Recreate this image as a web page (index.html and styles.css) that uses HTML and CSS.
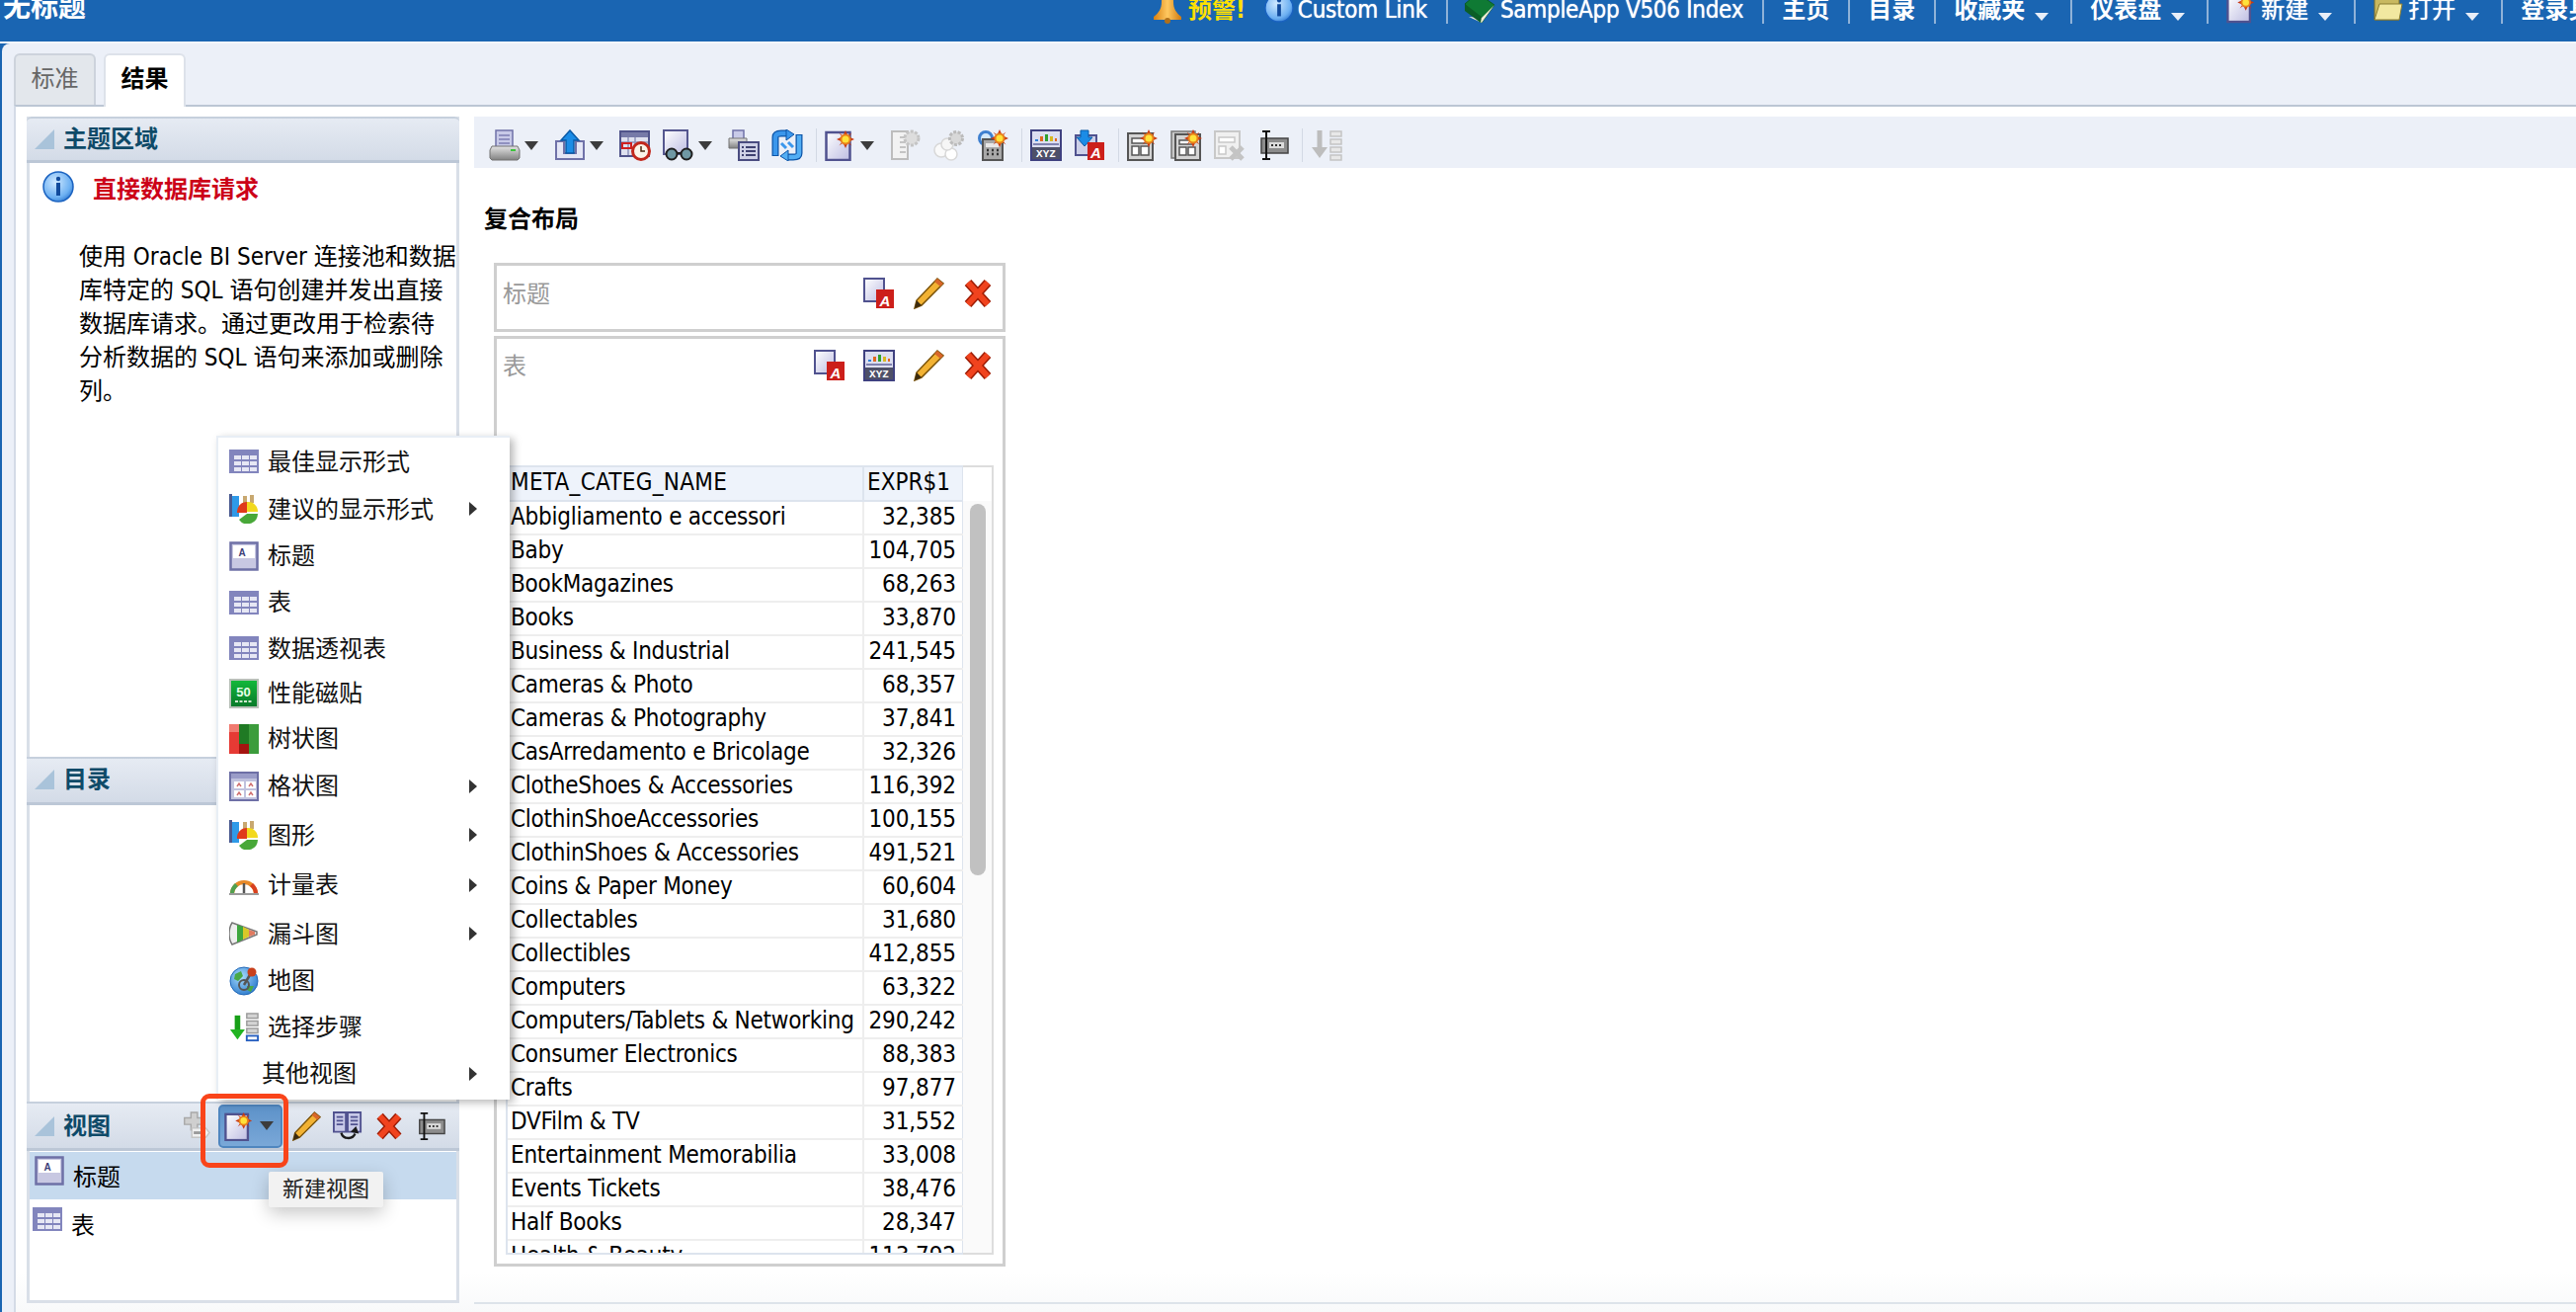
FILE: index.html
```html
<!DOCTYPE html>
<html lang="zh">
<head>
<meta charset="utf-8">
<title>无标题</title>
<link rel="stylesheet" href="styles.css">
</head>
<body>
<svg class="sprite" xmlns="http://www.w3.org/2000/svg">
<defs>
<linearGradient id="gDoc" x1="0" y1="0" x2="1" y2="1"><stop offset="0" stop-color="#fff"/><stop offset="1" stop-color="#bdbde2"/></linearGradient>
<linearGradient id="gPrn" x1="0" y1="0" x2="0" y2="1"><stop offset="0" stop-color="#e4e4e4"/><stop offset="1" stop-color="#808080"/></linearGradient>
<linearGradient id="gTile" x1="0" y1="0" x2="0" y2="1"><stop offset="0" stop-color="#12b83a"/><stop offset="1" stop-color="#0a7a2a"/></linearGradient>
<radialGradient id="gInfo" cx=".4" cy=".35" r=".8"><stop offset="0" stop-color="#cfe8ff"/><stop offset=".65" stop-color="#6cb0f2"/><stop offset="1" stop-color="#1560c0"/></radialGradient>
<radialGradient id="gGlobe" cx=".4" cy=".35" r=".8"><stop offset="0" stop-color="#a8dcff"/><stop offset="1" stop-color="#1a6cc4"/></radialGradient>
<linearGradient id="gBell" x1="0" y1="0" x2="1" y2="0"><stop offset="0" stop-color="#d98010"/><stop offset=".5" stop-color="#ffc860"/><stop offset="1" stop-color="#d07a10"/></linearGradient>
<g id="burst"><polygon points="0,-9 2.5,-3.5 6.5,-6.5 3.5,-2.5 9,0 3.5,2.5 6.5,6.5 2.5,3.5 0,9 -2.5,3.5 -6.5,6.5 -3.5,2.5 -9,0 -3.5,-2.5 -6.5,-6.5 -2.5,-3.5" fill="#c93a14"/><circle r="5.5" fill="#e8801a"/><circle r="3.5" fill="#ffe23a"/></g>
</defs>

<symbol id="i-printer" viewBox="0 0 32 32"><rect x="7" y="1" width="17" height="18" fill="#c8cae8" stroke="#6f71a8" stroke-width="1.5"/><path d="M10 6h11M10 10h11M10 14h11" stroke="#7c7eb2" stroke-width="1.5"/><path d="M3 17h26l2 4v8l-2 2H3l-2-2v-8z" fill="url(#gPrn)" stroke="#737373"/><rect x="22" y="20" width="5" height="2" fill="#3bc43b"/></symbol>
<symbol id="i-export" viewBox="0 0 32 32"><path d="M2 12h8v12h12V12h8v18H2z" fill="#e4e6f6" stroke="#6f71a8" stroke-width="2"/><polygon points="16,1 25,11 20,11 20,24 12,24 12,11 7,11" fill="#1b8ce6" stroke="#0b5aa6" stroke-width="1.500"/></symbol>
<symbol id="i-calendar" viewBox="0 0 32 32"><rect x="1" y="2" width="29" height="25" fill="#dfe1ef" stroke="#50538a" stroke-width="2"/><rect x="2" y="3" width="27" height="5" fill="#777aa8"/><path d="M2 13h27M2 19h18M9 8v18M16 8v18" stroke="#8f92bb" stroke-width="1.500"/><rect x="3" y="14" width="9" height="5" fill="none" stroke="#d02020" stroke-width="2"/><circle cx="22" cy="22" r="8.500" fill="#fbf4e8" stroke="#c2281c" stroke-width="3"/><path d="M22 17v5h4" fill="none" stroke="#4a2a10" stroke-width="1.500"/></symbol>
<symbol id="i-glasses" viewBox="0 0 32 32"><rect x="1" y="1" width="24" height="24" fill="url(#gDoc)" stroke="#55578f" stroke-width="2"/><circle cx="9" cy="25" r="5.500" fill="#6f98a4" stroke="#1e1e1e" stroke-width="2"/><circle cx="24" cy="25" r="5.500" fill="#6f98a4" stroke="#1e1e1e" stroke-width="2"/><path d="M14 24h5" stroke="#1e1e1e" stroke-width="2"/></symbol>
<symbol id="i-printlist" viewBox="0 0 32 32"><rect x="5" y="1" width="11" height="9" fill="#c8cae8" stroke="#6f71a8" stroke-width="1.500"/><path d="M1 9h18v10H1z" fill="url(#gPrn)" stroke="#737373"/><rect x="11" y="13" width="20" height="18" fill="#cfd1e6" stroke="#4a4c80" stroke-width="2"/><path d="M18 18h10M18 22h10M18 26h10M14 18h2M14 22h2M14 26h2" stroke="#3f4170" stroke-width="2"/></symbol>
<symbol id="i-refresh" viewBox="0 0 32 32"><path d="M4 27V8c0-3 2-4 6-4h6" fill="none" stroke="#0d55a8" stroke-width="7"/><path d="M4 26V8c0-3 2-4 6-4h6" fill="none" stroke="#3b97ec" stroke-width="4.500"/><polygon points="15,0 23,5 15,11" fill="#3b97ec" stroke="#0d55a8"/><path d="M28 5v19c0 3-2 4-6 4h-6" fill="none" stroke="#0d55a8" stroke-width="7"/><path d="M28 6v18c0 3-2 4-6 4h-6" fill="none" stroke="#52aef4" stroke-width="4.500"/><polygon points="17,21 9,27 17,32" fill="#52aef4" stroke="#0d55a8"/><path d="M10 14l5 5M22 18l-5-5" stroke="#3b97ec" stroke-width="3"/></symbol>
<symbol id="i-new" viewBox="0 0 32 32"><rect x="1.500" y="3" width="24" height="28" fill="url(#gDoc)" stroke="#50528f" stroke-width="2.500"/><use href="#burst" transform="translate(21 10)"/></symbol>
<symbol id="i-gear" viewBox="0 0 32 32"><path d="M2 2h16v28H2z" fill="#f2f2f2" stroke="#bdbdbd" stroke-width="2"/><path d="M10 8h6M10 13h6M10 18h6M10 23h6" stroke="#c4c4c4" stroke-width="2"/><circle cx="22" cy="9" r="7" fill="#ddd" stroke="#c4c4c4" stroke-width="3" stroke-dasharray="3 1.500"/></symbol>
<symbol id="i-circles" viewBox="0 0 32 32"><circle cx="8" cy="21" r="7" fill="#fafafa" stroke="#d8d8d8" stroke-width="1.500"/><circle cx="18" cy="25" r="6" fill="#fff" stroke="#d8d8d8" stroke-width="1.500"/><circle cx="14" cy="15" r="6" fill="#f6f6f6" stroke="#d8d8d8" stroke-width="1.500"/><circle cx="23" cy="9" r="6.500" fill="#d8d8d8" stroke="#bbb" stroke-width="3" stroke-dasharray="3 1.500"/></symbol>
<symbol id="i-calc" viewBox="0 0 32 32"><circle cx="9" cy="9" r="6.500" fill="#d4e8fa" stroke="#3f80d0" stroke-width="3"/><rect x="6" y="10" width="20" height="21" fill="#a8a8a8" stroke="#555" stroke-width="2"/><rect x="9" y="14" width="14" height="4" fill="#e8e8e8"/><path d="M10 21h2m3 0h2m3 0h2M10 25h2m3 0h2m3 0h2" stroke="#333" stroke-width="2.500"/><use href="#burst" transform="translate(23 9)"/></symbol>
<symbol id="i-xyz" viewBox="0 0 32 32"><rect x="1" y="1" width="30" height="30" fill="#dcdef0" stroke="#3f4180" stroke-width="2"/><rect x="5" y="10" width="3" height="2" fill="#3080d8"/><rect x="10" y="7" width="3" height="5" fill="#e06820"/><rect x="15" y="5" width="3" height="7" fill="#30a030"/><rect x="20" y="7" width="3" height="5" fill="#d8b820"/><rect x="25" y="9" width="2" height="3" fill="#e06820"/><path d="M3 15h26" stroke="#8082b0" stroke-width="2"/><rect x="2" y="18" width="28" height="12" fill="#4e5068"/><text class="svgxyz" x="16" y="28" text-anchor="middle">XYZ</text></symbol>
<symbol id="i-down" viewBox="0 0 32 32"><rect x="2" y="6" width="21" height="20" fill="#cdd0e8" stroke="#50528f" stroke-width="2"/><polygon points="11,17 3,8 7,8 7,1 15,1 15,8 19,8" fill="#1b8ce6" stroke="#0b5aa6"/><rect x="14" y="13" width="17" height="18" fill="#cc1f1a"/><text class="svga" x="22.500" y="28.500" text-anchor="middle">A</text></symbol>
<symbol id="i-doca" viewBox="0 0 32 32"><rect x="1" y="1" width="20" height="23" fill="url(#gDoc)" stroke="#50528f" stroke-width="2"/><rect x="13" y="12" width="18" height="19" fill="#cc1f1a"/><text class="svga" x="22" y="28.500" text-anchor="middle">A</text></symbol>
<symbol id="i-l1" viewBox="0 0 32 32"><rect x="1" y="4" width="25" height="27" fill="#d4d4d4" stroke="#555" stroke-width="2"/><rect x="5" y="9" width="15" height="5" fill="#fff" stroke="#555" stroke-width="1.500"/><rect x="5" y="17" width="7" height="9" fill="#fff" stroke="#555" stroke-width="1.500"/><rect x="14" y="17" width="8" height="9" fill="#fff" stroke="#555" stroke-width="1.500"/><use href="#burst" transform="translate(22 9)"/></symbol>
<symbol id="i-l2" viewBox="0 0 32 32"><rect x="1" y="2" width="24" height="27" fill="#c8c8c8" stroke="#777" stroke-width="1.500"/><rect x="5" y="5" width="25" height="26" fill="#d4d4d4" stroke="#555" stroke-width="2"/><rect x="9" y="11" width="14" height="4" fill="#fff" stroke="#555" stroke-width="1.500"/><rect x="9" y="18" width="7" height="8" fill="#fff" stroke="#555" stroke-width="1.500"/><rect x="18" y="18" width="7" height="8" fill="#fff" stroke="#555" stroke-width="1.500"/><use href="#burst" transform="translate(23 9)"/></symbol>
<symbol id="i-lx" viewBox="0 0 32 32"><rect x="1" y="2" width="25" height="27" fill="#f0f0f0" stroke="#c8c8c8" stroke-width="2"/><rect x="5" y="8" width="16" height="5" fill="#fff" stroke="#c8c8c8" stroke-width="1.500"/><rect x="5" y="17" width="7" height="8" fill="#fff" stroke="#c8c8c8" stroke-width="1.500"/><path d="M17 18l12 12M29 18L17 30" stroke="#c4c4c4" stroke-width="5"/></symbol>
<symbol id="i-width" viewBox="0 0 32 32"><rect x="4" y="9" width="27" height="15" fill="#8c8c8c" stroke="#444" stroke-width="1.500"/><rect x="12" y="13" width="15" height="6" fill="#dcdcdc"/><path d="M14 16h2m2 0h2m2 0h2" stroke="#333" stroke-width="2"/><path d="M5 2h8M9 2v28M5 30h8" fill="none" stroke="#111" stroke-width="2"/></symbol>
<symbol id="i-order" viewBox="0 0 32 32"><path d="M9 1v19" stroke="#bdbdbd" stroke-width="5"/><polygon points="1,18 17,18 9,29" fill="#bdbdbd"/><g fill="#e8e8e8" stroke="#c4c4c4" stroke-width="1.500"><rect x="20" y="2" width="11" height="5"/><rect x="20" y="10" width="11" height="5"/><rect x="20" y="18" width="11" height="5"/><rect x="20" y="26" width="11" height="5"/></g></symbol>
<symbol id="i-steps" viewBox="0 0 32 32"><path d="M9 3v18" stroke="#18a018" stroke-width="6"/><polygon points="1,18 17,18 9,29" fill="#22b422"/><g fill="#d4d4d4" stroke="#9a9a9a" stroke-width="1.500"><rect x="19" y="1" width="12" height="5"/><rect x="19" y="9" width="12" height="5"/><rect x="19" y="17" width="12" height="5"/></g><rect x="19" y="25" width="12" height="5" fill="#fff" stroke="#2860c0" stroke-width="2"/></symbol>
<symbol id="i-pencil" viewBox="0 0 32 32"><path d="M25 1l6 5L9 28l-7 3 2-8z" fill="#f2b233" stroke="#7a5208" stroke-width="1.500"/><path d="M4 23l5 5-7 3z" fill="#3a2a10"/><path d="M25 1l6 5-3 3-6-5z" fill="#d8662a"/></symbol>
<symbol id="i-x" viewBox="0 0 32 32"><path d="M6 5l20 22M26 5L6 27" stroke="#9e1c04" stroke-width="9"/><path d="M6 5l20 22M26 5L6 27" stroke="#f0431e" stroke-width="6"/></symbol>
<symbol id="i-add" viewBox="0 0 32 32"><path d="M11 1h7v6h7v7h-7v6h-7v-6H4V7h7z" fill="#cfcfcf" stroke="#a8a8a8" stroke-width="1.500"/><path d="M12 18h15l4 5-4 5H12z" fill="#f0f0f0" stroke="#c4c4c4" stroke-width="1.500"/><path d="M14 23h9" stroke="#999" stroke-width="3"/></symbol>
<symbol id="i-swap" viewBox="0 0 32 32"><path d="M1 1h13v21H1zM16 1h14v21H16z" fill="#c8cae8" stroke="#50528f" stroke-width="2"/><path d="M4 6h7M4 10h7M4 14h7M19 6h8M19 10h8M19 14h8" stroke="#50528f" stroke-width="2"/><path d="M9 23a8 8 0 0 0 15 1" fill="none" stroke="#1a1a1a" stroke-width="2.500"/><polygon points="19,22 28,24 25,16" fill="#1a1a1a"/></symbol>
<symbol id="i-grid" viewBox="0 0 30 24"><rect width="30" height="24" fill="#8285bd"/><g fill="#e6e7f4"><rect x="5" y="6" width="7" height="4"/><rect x="13" y="6" width="7" height="4"/><rect x="21" y="6" width="7" height="4"/><rect x="5" y="12" width="7" height="4"/><rect x="13" y="12" width="7" height="4"/><rect x="21" y="12" width="7" height="4"/><rect x="5" y="18" width="7" height="4"/><rect x="13" y="18" width="7" height="4"/><rect x="21" y="18" width="7" height="4"/></g></symbol>
<symbol id="i-chart" viewBox="0 0 30 30"><rect x="0" y="0" width="3" height="23" fill="#4a5a90"/><rect x="3" y="2" width="7" height="21" fill="#2f9ae8"/><rect x="14" y="2" width="4" height="8" fill="#c8a870"/><rect x="21" y="1" width="4" height="8" fill="#c8a870"/><path d="M18 19H8A10 10 0 0 1 18 8z" fill="#e03a1a"/><path d="M18 18V8a10 10 0 0 1 11 10z" fill="#f2d91e"/><path d="M18 20h11A10.500 10.500 0 0 1 10 26z" fill="#48a838"/></symbol>
<symbol id="i-title" viewBox="0 0 30 30"><rect x="1.500" y="1.500" width="27" height="27" fill="#c8c8e2" stroke="#6e70a6" stroke-width="2.500"/><rect x="4" y="4" width="22" height="13" fill="#fff"/><text class="svgt" x="13" y="15" text-anchor="middle">A</text></symbol>
<symbol id="i-tile" viewBox="0 0 30 30"><rect x="0" y="0" width="30" height="30" fill="#b8c0b8"/><rect x="2" y="2" width="26" height="26" fill="url(#gTile)"/><text class="svg50" x="14.500" y="18" text-anchor="middle">50</text><path d="M6 23h18" stroke="#cfe8cf" stroke-width="2" stroke-dasharray="3 1.500"/></symbol>
<symbol id="i-tree" viewBox="0 0 30 30"><rect width="10" height="30" fill="#e63a34"/><rect y="0" width="10" height="8" fill="#f07a70"/><rect x="10" width="10" height="20" fill="#1f7a24"/><rect x="20" width="10" height="30" fill="#3c9c3c"/><rect x="10" y="20" width="10" height="10" fill="#a51410"/></symbol>
<symbol id="i-trellis" viewBox="0 0 30 30"><rect x="1" y="1" width="28" height="28" fill="#c0c2de" stroke="#6e70a6" stroke-width="2"/><rect x="2" y="2" width="26" height="5" fill="#9a9cc8"/><g fill="#fff"><rect x="5" y="10" width="10" height="7"/><rect x="17" y="10" width="10" height="7"/><rect x="5" y="19" width="10" height="7"/><rect x="17" y="19" width="10" height="7"/></g><path d="M8 15l2-3 2 3M20 15l2-3 2 3M8 24l2-3 2 3M20 24l2-3 2 3" fill="none" stroke="#d07070" stroke-width="1.500"/></symbol>
<symbol id="i-gauge" viewBox="0 0 30 20"><path d="M1 19a14 14 0 0 1 28 0h-4a10 10 0 0 0-20 0z" fill="#e88a28"/><path d="M1 19a14 14 0 0 1 5-11l3 3a10 10 0 0 0-4 8z" fill="#50a050"/><path d="M24 8a14 14 0 0 1 5 11h-4a10 10 0 0 0-4-8z" fill="#d84020"/><path d="M15 8v11" stroke="#555" stroke-width="2.500"/><path d="M0 19h30" stroke="#9a9a9a" stroke-width="2"/></symbol>
<symbol id="i-funnel" viewBox="0 0 30 24"><path d="M3 1l25 9v3L3 23c-4-6-4-16 0-22z" fill="#eee" stroke="#777" stroke-width="1.500"/><path d="M8 3v18l6-3V5z" fill="#3ea63e"/><path d="M14 5v13l6-3V8z" fill="#d8c828"/><path d="M20 8v7l6-2v-3z" fill="#e07a60"/></symbol>
<symbol id="i-globe" viewBox="0 0 30 30"><circle cx="15" cy="15" r="14" fill="url(#gGlobe)" stroke="#2168b8"/><path d="M6 8l6-3 2 5-5 5-4-2zM18 20l7 0-3 6-4-2z" fill="#48a848"/><circle cx="15" cy="19" r="5" fill="none" stroke="#555" stroke-width="2"/><path d="M15 19l7-12" stroke="#555" stroke-width="2.500"/><circle cx="23" cy="6" r="4.500" fill="#c8401c"/></symbol>
<symbol id="i-bell" viewBox="0 0 30 32"><path d="M15 0c4 0 6 4 6 10 0 7 3 11 8 15v3H1v-3c5-4 8-8 8-15 0-6 2-10 6-10z" fill="url(#gBell)"/><circle cx="15" cy="29" r="3" fill="#b0701a"/></symbol>
<symbol id="i-info" viewBox="0 0 32 32"><circle cx="16" cy="16" r="15" fill="url(#gInfo)" stroke="#1a62c0" stroke-width="1.500"/><circle cx="16" cy="8" r="2.200" fill="#114a9c"/><rect x="14" y="12" width="4" height="13" fill="#114a9c"/></symbol>
<symbol id="i-book" viewBox="0 0 32 32"><path d="M1 12L14 1l17 12-13 18z" fill="#0f7a34" stroke="#0a5a28"/><path d="M5 25l13 6 13-18-13 13z" fill="#f0ecd8"/><path d="M1 12l17 13-1 6L1 19z" fill="#0b5e28"/></symbol>
<symbol id="i-folder" viewBox="0 0 30 32"><path d="M1 3h11l3 3h11v22H1z" fill="#c8b860" stroke="#7a6c28"/><path d="M1 28l5-16h23l-3 16z" fill="#f2e8a0" stroke="#8a7c30"/></symbol>
<symbol id="i-tri" viewBox="0 0 20 20"><polygon points="20,0 20,20 0,20" fill="#a9c3da"/></symbol>
</svg>

<header class="top">
  <div class="app-title">无标题</div>
  <nav class="nav">
    <svg class="nic"><use href="#i-bell"/></svg><span class="nt warn">预警!</span>
    <svg class="nic ni2"><use href="#i-info"/></svg><span class="nt nt2">Custom Link</span>
    <i class="nsep"></i>
    <svg class="nic nbk"><use href="#i-book"/></svg><span class="nt nt1 nt3">SampleApp V506 Index</span>
    <i class="nsep"></i><span class="nt">主页</span>
    <i class="nsep"></i><span class="nt">目录</span>
    <i class="nsep"></i><span class="nt">收藏夹</span><i class="ncaret"></i>
    <i class="nsep"></i><span class="nt">仪表盘</span><i class="ncaret"></i>
    <i class="nsep"></i><svg class="nic"><use href="#i-new"/></svg><span class="nt nt1">新建</span><i class="ncaret"></i>
    <i class="nsep"></i><svg class="nic"><use href="#i-folder"/></svg><span class="nt nt1">打开</span><i class="ncaret"></i>
    <i class="nsep"></i><span class="nt">登录身份</span>
  </nav>
</header>

<div class="page">
  <div class="tabs">
    <div class="tab">标准</div>
    <div class="tab active">结果</div>
  </div>
  <div class="content">
    <aside class="side">
      <section class="sec sec-subject">
        <div class="sec-h"><svg class="tri"><use href="#i-tri"/></svg><span class="sec-t">主题区域</span></div>
        <div class="info-row"><svg class="info"><use href="#i-info"/></svg><span class="req">直接数据库请求</span></div>
        <p class="desc">使用 Oracle BI Server 连接池和数据<br>库特定的 SQL 语句创建并发出直接<br>数据库请求。通过更改用于检索待<br>分析数据的 SQL 语句来添加或删除<br>列。</p>
      </section>
      <section class="sec sec-catalog">
        <div class="sec-h sec-h2"><svg class="tri"><use href="#i-tri"/></svg><span class="sec-t">目录</span></div>
      </section>
      <section class="sec sec-views">
        <div class="sec-h sec-h3">
          <svg class="tri"><use href="#i-tri"/></svg><span class="sec-t">视图</span>
          <div class="vtools">
            <svg class="ic30"><use href="#i-add"/></svg>
            <div class="hoverbtn"><svg class="ic30"><use href="#i-new"/></svg><i class="caret"></i></div>
            <svg class="ic30"><use href="#i-pencil"/></svg>
            <svg class="ic30"><use href="#i-swap"/></svg>
            <svg class="ic30"><use href="#i-x"/></svg>
            <svg class="ic30"><use href="#i-width"/></svg>
          </div>
        </div>
        <div class="vrow sel"><svg class="ic-title"><use href="#i-title"/></svg><span class="vtext">标题</span></div>
        <div class="vrow"><svg class="ic-grid"><use href="#i-grid"/></svg><span class="vtext">表</span></div>
      </section>
    </aside>

    <main class="main">
      <div class="toolbar">
        <div class="tg"><svg class="ic"><use href="#i-printer"/></svg><i class="caret"></i></div>
        <div class="tg"><svg class="ic"><use href="#i-export"/></svg><i class="caret"></i></div>
        <svg class="ic"><use href="#i-calendar"/></svg>
        <div class="tg"><svg class="ic"><use href="#i-glasses"/></svg><i class="caret"></i></div>
        <svg class="ic"><use href="#i-printlist"/></svg>
        <svg class="ic"><use href="#i-refresh"/></svg>
        <i class="tsep"></i>
        <div class="tg"><svg class="ic"><use href="#i-new"/></svg><i class="caret"></i></div>
        <svg class="ic"><use href="#i-gear"/></svg>
        <svg class="ic"><use href="#i-circles"/></svg>
        <svg class="ic"><use href="#i-calc"/></svg>
        <i class="tsep"></i>
        <svg class="ic"><use href="#i-xyz"/></svg>
        <svg class="ic"><use href="#i-down"/></svg>
        <i class="tsep"></i>
        <svg class="ic"><use href="#i-l1"/></svg>
        <svg class="ic"><use href="#i-l2"/></svg>
        <svg class="ic"><use href="#i-lx"/></svg>
        <svg class="ic"><use href="#i-width"/></svg>
        <i class="tsep"></i>
        <svg class="ic"><use href="#i-order"/></svg>
      </div>
      <h2 class="layout-h">复合布局</h2>
      <div class="box box-title">
        <div class="box-h"><span class="box-t">标题</span><div class="box-ic"><svg class="ic"><use href="#i-doca"/></svg><svg class="ic"><use href="#i-pencil"/></svg><svg class="ic"><use href="#i-x"/></svg></div></div>
      </div>
      <div class="box box-table">
        <div class="box-h"><span class="box-t">表</span><div class="box-ic"><svg class="ic"><use href="#i-doca"/></svg><svg class="ic"><use href="#i-xyz"/></svg><svg class="ic"><use href="#i-pencil"/></svg><svg class="ic"><use href="#i-x"/></svg></div></div>
        <div class="tbl-wrap">
          <div class="tbl-clip">
            <table class="tbl">
              <thead><tr><th class="c1">META_CATEG_NAME</th><th class="c2">EXPR$1</th></tr></thead>
              <tbody>
                <tr><td>Abbigliamento e accessori</td><td class="n">32,385</td></tr>
                <tr><td>Baby</td><td class="n">104,705</td></tr>
                <tr><td>BookMagazines</td><td class="n">68,263</td></tr>
                <tr><td>Books</td><td class="n">33,870</td></tr>
                <tr><td>Business &amp; Industrial</td><td class="n">241,545</td></tr>
                <tr><td>Cameras &amp; Photo</td><td class="n">68,357</td></tr>
                <tr><td>Cameras &amp; Photography</td><td class="n">37,841</td></tr>
                <tr><td>CasArredamento e Bricolage</td><td class="n">32,326</td></tr>
                <tr><td>ClotheShoes &amp; Accessories</td><td class="n">116,392</td></tr>
                <tr><td>ClothinShoeAccessories</td><td class="n">100,155</td></tr>
                <tr><td>ClothinShoes &amp; Accessories</td><td class="n">491,521</td></tr>
                <tr><td>Coins &amp; Paper Money</td><td class="n">60,604</td></tr>
                <tr><td>Collectables</td><td class="n">31,680</td></tr>
                <tr><td>Collectibles</td><td class="n">412,855</td></tr>
                <tr><td>Computers</td><td class="n">63,322</td></tr>
                <tr><td>Computers/Tablets &amp; Networking</td><td class="n">290,242</td></tr>
                <tr><td>Consumer Electronics</td><td class="n">88,383</td></tr>
                <tr><td>Crafts</td><td class="n">97,877</td></tr>
                <tr><td>DVFilm &amp; TV</td><td class="n">31,552</td></tr>
                <tr><td>Entertainment Memorabilia</td><td class="n">33,008</td></tr>
                <tr><td>Events Tickets</td><td class="n">38,476</td></tr>
                <tr><td>Half Books</td><td class="n">28,347</td></tr>
                <tr><td>Health &amp; Beauty</td><td class="n">113,792</td></tr>
              </tbody>
            </table>
          </div>
          <div class="track"><div class="thumb"></div></div>
        </div>
      </div>
    </main>
  </div>
</div>

<div class="menu">
  <div class="mi r48"><svg class="mic mic-g"><use href="#i-grid"/></svg><span>最佳显示形式</span></div>
  <div class="mi r48"><svg class="mic"><use href="#i-chart"/></svg><span>建议的显示形式</span><i class="arrow"></i></div>
  <div class="mi r47"><svg class="mic"><use href="#i-title"/></svg><span>标题</span></div>
  <div class="mi r47"><svg class="mic mic-g"><use href="#i-grid"/></svg><span>表</span></div>
  <div class="mi r46"><svg class="mic mic-g"><use href="#i-grid"/></svg><span>数据透视表</span></div>
  <div class="mi r45"><svg class="mic"><use href="#i-tile"/></svg><span>性能磁贴</span></div>
  <div class="mi r47"><svg class="mic"><use href="#i-tree"/></svg><span>树状图</span></div>
  <div class="mi r49"><svg class="mic"><use href="#i-trellis"/></svg><span>格状图</span><i class="arrow"></i></div>
  <div class="mi r50"><svg class="mic"><use href="#i-chart"/></svg><span>图形</span><i class="arrow"></i></div>
  <div class="mi r51"><svg class="mic mic-s"><use href="#i-gauge"/></svg><span>计量表</span><i class="arrow"></i></div>
  <div class="mi r48"><svg class="mic mic-g"><use href="#i-funnel"/></svg><span>漏斗图</span><i class="arrow"></i></div>
  <div class="mi r47"><svg class="mic"><use href="#i-globe"/></svg><span>地图</span></div>
  <div class="mi r47"><svg class="mic"><use href="#i-steps"/></svg><span>选择步骤</span></div>
  <div class="mi r47 noicon"><span>其他视图</span><i class="arrow"></i></div>
</div>

<div class="redbox"></div>
<div class="tooltip">新建视图</div>
</body>
</html>
```
FILE: styles.css
```css
* { box-sizing: border-box; }
html, body { margin: 0; height: 100%; }
body {
  width: 2608px;
  height: 1328px;
  overflow: hidden;
  background: #1a65b2;
  font-family: "DejaVu Sans", "Noto Sans CJK SC", sans-serif;
  font-stretch: condensed;
  font-size: 24px;
  color: #000;
  display: flex;
  flex-direction: column;
  position: relative;
}
.sprite { position: absolute; width: 0; height: 0; }
.svgxyz { font: bold 11px "Liberation Mono", monospace; fill: #fff; }
.svga { font: italic bold 15px "Liberation Sans", sans-serif; fill: #fff; }
.svgt { font: bold 10px "Liberation Sans", sans-serif; fill: #3c3e78; }
.svg50 { font: bold 13px "Liberation Sans", sans-serif; fill: #e8ffe8; }

/* top bar */
.top {
  flex: none;
  height: 44px;
  background: #1a65b2;
  border-bottom: 2px solid #f4f7fb;
  display: flex;
  align-items: flex-start;
  overflow: hidden;
}
.app-title {
  color: #fff;
  font-size: 28px;
  font-weight: 700;
  line-height: 16px;
  padding-left: 3px;
}
.nav {
  margin-left: auto;
  flex: none;
  width: 1441px;
  height: 42px;
  display: flex;
  align-items: flex-start;
  overflow: hidden;
  white-space: nowrap;
  color: #fff;
}
.nt { line-height: 20px; font-weight: 700; flex: none; }
.nt1 { margin-left: 5px; font-weight: 400; text-shadow: 0 0 1px #fff; }
.nt2 { margin-left: 4px; font-weight: 400; text-shadow: 0 0 1px #fff; letter-spacing: -.25px; }
.nt3 { letter-spacing: -.3px; }
.warn { color: #ffe000; margin-left: 6px; }
.nic { width: 30px; height: 32px; flex: none; margin-top: -8px; overflow: visible; }
.ni2 { margin-left: 19px; }
.nbk { width: 32px; margin-left: -2px; }
.nsep { flex: none; width: 2px; height: 24px; background: #8fb2d8; margin: 0 18px 0 19px; }
.ncaret {
  flex: none;
  margin: 13px 3px 0 10px;
  border-left: 7px solid transparent;
  border-right: 7px solid transparent;
  border-top: 8px solid #e8eef8;
}

/* page */
.page {
  flex: 1;
  margin-left: 2px;
  background: #ecf0f8;
  border-top-left-radius: 8px;
  padding-top: 10px;
  display: flex;
  flex-direction: column;
  min-height: 0;
}
.tabs { display: flex; gap: 8px; padding-left: 12px; height: 52px; flex: none; }
.tab {
  width: 83px;
  height: 52px;
  background: #e3e7ec;
  border: 2px solid #cdd3dc;
  border-bottom: 0;
  border-radius: 6px 6px 0 0;
  color: #666;
  text-align: center;
  line-height: 48px;
}
.tab.active {
  background: #fff;
  color: #000;
  font-weight: 700;
  height: 54px;
  position: relative;
  z-index: 1;
  border-color: #dde2ea;
}
.content {
  flex: 1;
  min-height: 0;
  margin-left: 12px;
  background: linear-gradient(#fff 1180px, #f8f9fa);
  border-top: 2px solid #bcc6d4;
  border-left: 2px solid #d4dbe6;
  padding: 10px 0 0 11px;
  display: flex;
}

/* sidebar */
.side {
  flex: none;
  width: 438px;
  height: 1201px;
  border-left: 3px solid #d9dfe8;
  border-right: 3px solid #d9dfe8;
  border-bottom: 3px solid #d9dfe8;
  background: #fff;
  margin-right: 15px;
  display: flex;
  flex-direction: column;
}
.sec-subject { height: 648px; flex: none; }
.sec-catalog { height: 349px; flex: none; }
.sec-views { flex: 1; min-height: 0; }
.sec-h {
  height: 47px;
  margin: 0 -3px;
  background: linear-gradient(#e6ebf3, #d3dbe7);
  border-top: 2px solid #c6d0dd;
  border-bottom: 3px solid #bcc7d6;
  border-radius: 5px 5px 0 0;
  display: flex;
  align-items: center;
  padding-left: 8px;
}
.sec-h2 { height: 49px; border-radius: 0; padding-bottom: 2px; }
.sec-h3 { height: 50px; border-radius: 0; }
.tri { width: 20px; height: 20px; flex: none; }
.sec-t { font-weight: 700; color: #0e4a68; margin-left: 9px; line-height: 34px; flex: none; white-space: nowrap; }
.info-row { display: flex; align-items: center; height: 34px; margin: 7px 0 0 13px; }
.info { width: 32px; height: 32px; flex: none; }
.req { color: #cc0018; font-weight: 700; margin-left: 19px; }
.desc { margin: 37px 0 0 50px; line-height: 34px; white-space: nowrap; }

.vtools { display: flex; align-items: center; margin-left: 71px; flex: none; }
.ic30 { width: 30px; height: 30px; flex: none; margin-right: 12px; }
.hoverbtn {
  flex: none;
  width: 65px;
  height: 44px;
  margin: 0 9px 0 -4px;
  background: linear-gradient(#5d92c9, #7aa8d8);
  border: 2px solid #4f86bf;
  border-radius: 5px;
  display: flex;
  align-items: center;
  padding-left: 4px;
}
.hoverbtn .ic30 { margin-right: 6px; }
.vrow { display: flex; align-items: flex-start; height: 48px; padding-left: 4px; }
.vrow.sel { background: #c6daee; margin-top: 1px; }
.ic-title { width: 30px; height: 30px; margin: 4px 0 0 1px; flex: none; }
.ic-grid { width: 30px; height: 24px; margin: 8px 0 0 -1px; flex: none; }
.vtext { margin: 9px 0 0 9px; line-height: 34px; }
.vrow:not(.sel) .vtext { margin-top: 10px; }

/* main */
.main { flex: 1; min-width: 0; height: 1202px; border-bottom: 2px solid #dde3ea; }
.toolbar {
  height: 52px;
  background: #ecf0f8;
  display: flex;
  align-items: center;
  gap: 12px;
  padding: 6px 0 0 15px;
}
.ic { width: 32px; height: 32px; flex: none; }
.tg { display: flex; align-items: center; gap: 4px; margin-right: 4px; flex: none; }
.caret {
  flex: none;
  display: block;
  border-left: 7px solid transparent;
  border-right: 7px solid transparent;
  border-top: 9px solid #3c3c3c;
}
.tsep { flex: none; width: 1px; height: 34px; background: #d3d9e4; margin-left: 1px; margin-right: -4px; }
.layout-h { margin: 35px 0 0 10px; font-size: 24px; font-weight: 700; line-height: 34px; }
.box { width: 518px; margin-left: 20px; border: 3px solid #cfcfcf; }
.box-title { height: 70px; margin-top: 27px; padding-top: 11px; }
.box-table { height: 942px; margin-top: 4px; padding-top: 10px; }
.box-h { display: flex; align-items: center; height: 34px; padding: 0 9px 0 6px; }
.box-t { color: #999; margin-bottom: 3px; }
.box-ic { display: flex; gap: 18px; margin-left: auto; }
.tbl-wrap { display: flex; margin: 84px 0 0 9px; width: 494px; height: 799px; overflow: hidden; }
.tbl-clip { flex: none; width: 463px; height: 799px; overflow: hidden; border-top: 2px solid #dde4ee; border-bottom: 2px solid #dde4ee; border-left: 2px solid #dde4ee; }
.tbl { border-collapse: collapse; table-layout: fixed; width: 461px; }
.tbl th, .tbl td { height: 34px; padding: 0; line-height: 31px; font-weight: 400; overflow: hidden; white-space: nowrap; text-align: left; }
.c1 { width: 360px; }
.c2 { width: 101px; }
.tbl th { background: #eef3fb; border-bottom: 2px solid #dde4ee; border-right: 2px solid #dde4ee; padding: 0 0 2px 3px; letter-spacing: .3px; }
.tbl th.c2 { padding-left: 3px; letter-spacing: 0; }
.tbl td { border-bottom: 2px solid #eeeeee; border-right: 2px solid #eeeeee; padding: 0 0 1px 3px; letter-spacing: -.25px; }
.tbl td.n { text-align: right; padding: 0 6px 1px 0; border-right-color: #dde4ee; letter-spacing: -.1px; }
.track {
  flex: 1;
  background: linear-gradient(#fff 34px, #fafafa 34px);
  border-top: 2px solid #ddd;
  border-right: 2px solid #ddd;
  border-bottom: 2px solid #ddd;
  padding: 37px 0 0 7px;
}
.thumb { width: 16px; height: 376px; background: #c1c1c1; border-radius: 8px; }

/* overlays */
.menu {
  position: absolute;
  left: 219px;
  top: 441px;
  width: 297px;
  height: 672px;
  background: #fff;
  border-top: 2px solid #e8eef5;
  border-left: 2px solid #e8eef5;
  box-shadow: 4px 3px 8px rgba(0, 0, 0, .28);
  padding-right: 33px;
  color: #111;
  font-family: "Noto Sans CJK SC", sans-serif;
}
.mi { display: flex; align-items: center; padding-left: 11px; }
.mi.noicon { padding-left: 44px; }
.mi > span { margin: 0 0 4px 9px; }
.mi.noicon > span { margin-left: 0; }
.r45 { height: 45px; } .r46 { height: 46px; } .r47 { height: 47px; } .r48 { height: 48px; }
.r49 { height: 49px; } .r50 { height: 50px; } .r51 { height: 51px; }
.mic { width: 30px; height: 30px; flex: none; }
.mic-g { height: 24px; }
.mic-s { height: 20px; }
.arrow {
  margin-left: auto;
  border-top: 7px solid transparent;
  border-bottom: 7px solid transparent;
  border-left: 8px solid #333;
}
.redbox {
  position: absolute;
  left: 203px;
  top: 1107px;
  width: 89px;
  height: 75px;
  border: 5px solid #f9441a;
  border-radius: 9px;
}
.tooltip {
  position: absolute;
  left: 272px;
  top: 1186px;
  width: 116px;
  height: 36px;
  background: #f2f2f2;
  box-shadow: 0 6px 18px rgba(0, 0, 0, .22);
  border-radius: 2px;
  color: #222;
  font-size: 22px;
  line-height: 31px;
  text-align: center;
  font-family: "Noto Sans CJK SC", sans-serif;
}
```
